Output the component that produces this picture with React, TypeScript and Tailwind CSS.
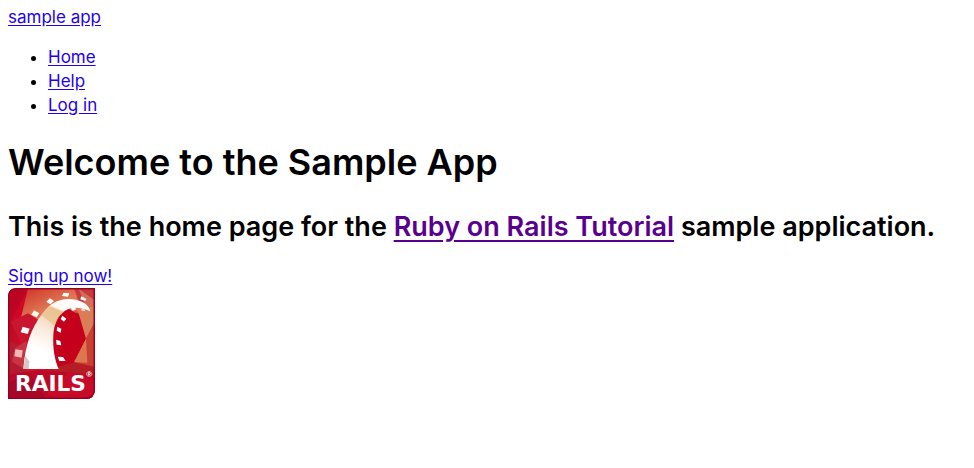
const navLinks = ['Home', 'Help', 'Log in'];

const linkClass = 'text-[#2200ee] underline underline-offset-2';

function RailsLogo() {
  return (
    <svg viewBox="24 24 261 333" className="block h-[111px] w-[87px]" role="img" aria-label="Rails logo">
      <defs>
        <linearGradient id="base" x1="0" y1="0" x2="1" y2="1">
          <stop offset="0" stopColor="#b80022" />
          <stop offset="0.5" stopColor="#cf1626" />
          <stop offset="1" stopColor="#a80724" />
        </linearGradient>
        <linearGradient id="glow" x1="0" y1="0" x2="1" y2="1">
          <stop offset="0" stopColor="#cf3024" />
          <stop offset="0.5" stopColor="#df7754" />
          <stop offset="1" stopColor="#c33c2c" />
        </linearGradient>
        <linearGradient id="track" gradientUnits="userSpaceOnUse" x1="190" y1="40" x2="100" y2="250">
          <stop offset="0" stopColor="#ffffff" />
          <stop offset="0.2" stopColor="#fffaf4" />
          <stop offset="0.25" stopColor="#f0ceaa" />
          <stop offset="0.55" stopColor="#fbece0" />
          <stop offset="0.8" stopColor="#ffffff" />
        </linearGradient>
        <clipPath id="badge">
          <path d="M50 24H285V327Q285 357 255 357H24V50Q24 24 50 24Z" />
        </clipPath>
      </defs>
      <g clipPath="url(#badge)">
        <rect x="24" y="24" width="261" height="333" fill="url(#base)" />
        <path d="M84 26L32 125L66 198L110 110Z" fill="#cf0828" />
        <path d="M84 26H222L270 90L180 110L60 125Z" fill="url(#glow)" />
        <path d="M222 26H284V150L250 100Z" fill="#c63a3c" />
        <path d="M236 26L283 60V105L260 85Z" fill="#d36c58" />
        <path d="M32 125L84 100L112 118L66 198Z" fill="#c91530" />
        <path d="M24 180L66 198L78 285L24 310Z" fill="#b51a30" />
        <path d="M44 205L80 182L74 268L36 245Z" fill="#c93444" />
        <path d="M195 80L238 105L258 176L222 247L150 268L140 130Z" fill="#c5001c" />
        <path d="M222 76L284 82V130L258 176L236 100Z" fill="#d97c58" />
        <path d="M258 176L284 125V265L222 247Z" fill="#c84030" />
        <path d="M222 247L258 176L262 248Z" fill="#dc7850" />
        <path d="M150 268L222 247L284 260V300L170 284Z" fill="#b51c24" />
        <path d="M24 284L120 270L284 285V357H24Z" fill="#bd0928" />
        <path d="M24 310L85 280L140 357H24Z" fill="#a80828" />
        <path d="M140 340L210 275L284 300V357H175Z" fill="#c90b2a" />
        <path d="M70 267C76 193 94 144 126 102C151 69 174 58 204 57C240 57 266 71 271 94C240 80 215 80 195 92C170 108 162 135 160 165C158 205 164 240 176 267Z" fill="url(#track)" />
        <path d="M124 105L151 79L192 95L176 110L164 138Z" fill="#e7bd82" opacity=".65" />
        <path d="M70 267L75 228L88 244L86 267Z" fill="#d9c8c4" />
        <path d="M46 208L68 211L65 233L43 229Z" fill="#f1b8b6" />
        <path d="M68 140L89 146L83 162L62 157Z" fill="#fff" />
        <path d="M102 91L118 100L110 112L94 104Z" fill="#fff8ef" />
        <path d="M150 55L162 63L151 73L139 65Z" fill="#fff" />
        <path d="M191 38L208 40L204 50L186 48Z" fill="#fff" />
        <path d="M244 49L259 57L256 63L241 58Z" fill="#fff" />
        <path d="M212 86L224 82L229 88L218 93Z" fill="#fff" />
        <path d="M243 86L254 88L256 94L245 92Z" fill="#f5d2bd" />
        <path d="M187 107L199 116L192 125L182 117Z" fill="#fff" />
        <path d="M172 140L184 146L182 158L170 152Z" fill="#fff" />
        <path d="M168 179L181 183L184 196L170 194Z" fill="#fff" />
        <path d="M173 230L189 231L197 243L178 243Z" fill="#fff" />
        <path d="M50 26H283V327Q283 355 255 355H26V50Q26 26 50 26Z" fill="none" stroke="#99001f" strokeWidth="5" />
        <text x="45" y="332" fill="#fff" fontFamily="DejaVu Sans, sans-serif" fontWeight="700" fontSize="65">RAILS</text>
        <text x="259" y="291" fill="#fff" fontFamily="Liberation Sans, sans-serif" fontWeight="700" fontSize="24">®</text>
      </g>
    </svg>
  );
}

export default function App() {
  return (
    <div className="bg-white px-2 pt-[5px] pb-2 font-['Inter',sans-serif] text-[17px] leading-6 text-black">
      <header>
        <a href="#" className={linkClass}>sample app</a>
        <nav className="my-4">
          <ul className="list-disc pl-10">
            {navLinks.map((label) => (
              <li key={label}>
                <a href="#" className={linkClass}>{label}</a>
              </li>
            ))}
          </ul>
        </nav>
      </header>
      <main>
        <h1 className="mt-5 text-[36px] leading-[50px] font-semibold">Welcome to the Sample App</h1>
        <h2 className="mt-5 mb-[17px] text-[27px] leading-10 font-semibold">
          This is the home page for the{' '}
          <a href="#" className="text-[#5a0090] underline underline-offset-4">Ruby on Rails Tutorial</a>{' '}
          sample application.
        </h2>
        <a href="#" className={linkClass}>Sign up now!</a>
        <a href="#" className="block w-fit" aria-label="Ruby on Rails">
          <RailsLogo />
        </a>
      </main>
    </div>
  );
}
